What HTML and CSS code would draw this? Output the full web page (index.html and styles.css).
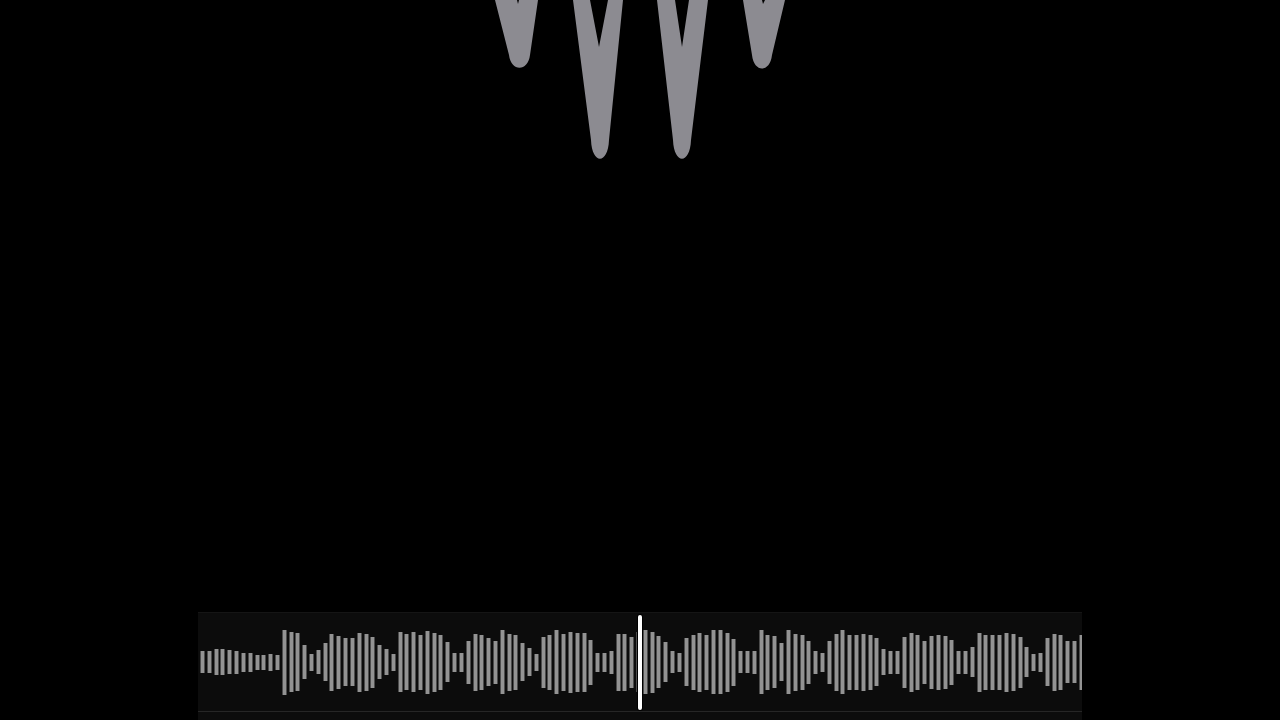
FILE: index.html
```html
<!DOCTYPE html>
<html lang="en">
<head>
    <meta charset="UTF-8">
    <meta name="viewport" content="width=device-width, initial-scale=1.0">
    <title>Waveform</title>
    <link rel="stylesheet" href="styles.css">
</head>
<body>
    <!-- Visualizer spikes at the top -->
    <svg class="spikes" width="1280" height="170" viewBox="0 0 1280 170">
        <path d="M495,0 L509,55 C511,72 528,72 530,55 L538,0 L519,0 L518,4 L517,0 Z"/>
        <path d="M573,0 L591,140 C592,165 608,165 609,140 L623,0 L608,0 L599,47 L590,0 Z"/>
        <path d="M657,0 L673,140 C674,165 690,165 691,140 L708,0 L689,0 L682,47 L675,0 Z"/>
        <path d="M743,0 L752,55 C754,73 770,73 772,55 L785,0 L765,0 L763,4 L762,0 Z"/>
    </svg>

    <div class="spacer"></div>

    <!-- Waveform scrubber -->
    <div class="panel">
        <div class="bars" id="bars"></div>
        <div class="playhead"></div>
    </div>

    <script>
        // bar heights, left to right
        const heights = [
            22, 22, 26, 26, 24, 23, 19, 19, 15, 15, 17, 15, 65, 60, 58, 34, 17, 24, 38, 57,
            53, 48, 48, 59, 57, 51, 34, 26, 17, 60, 56, 60, 55, 63, 59, 55, 40, 19, 19, 43,
            57, 55, 48, 43, 64, 57, 55, 38, 28, 17, 51, 55, 64, 57, 61, 59, 59, 45, 19, 19,
            23, 57, 57, 51, 60, 64, 61, 52, 40, 22, 19, 48, 55, 59, 55, 64, 64, 59, 47, 22,
            22, 23, 64, 55, 52, 38, 64, 57, 55, 43, 23, 19, 43, 57, 64, 55, 55, 57, 55, 48,
            26, 23, 23, 51, 59, 55, 43, 53, 55, 53, 45, 23, 23, 30, 59, 55, 55, 55, 59, 57,
            51, 30, 17, 19, 48, 57, 55, 42, 42, 55
        ];

        const bars = document.getElementById("bars");
        heights.forEach(h => {
            const bar = document.createElement("div");
            bar.className = "bar";
            bar.style.height = h + "px";
            bars.appendChild(bar);
        });
    </script>
</body>
</html>
```

FILE: styles.css
```css
body {
    margin: 0;
    height: 720px;
    background: #000;
    display: flex;
    flex-direction: column;
    overflow: hidden;
    font-family: "Liberation Sans", sans-serif;
}
.spikes {
    display: block;
    flex: none;
}
.spikes path {
    fill: #8c8b91;
}
.spacer {
    flex: 1;
}
.panel {
    position: relative;
    flex: none;
    width: 884px;
    height: 107px;
    margin-left: 198px;
    background: #0c0c0c;
    border-top: 1px solid #151515;
    overflow: hidden;
}
.bars {
    display: flex;
    align-items: center;
    gap: 1.816px;
    height: 98px;
    padding-left: 2px;
    border-bottom: 1px solid #262626;
}
.bar {
    flex: none;
    width: 3px;
    background: #939393;
    border-left: 1px solid #4c4c4c;
    border-right: 1px solid #4c4c4c;
}
.playhead {
    position: absolute;
    left: 440px;
    top: 2px;
    width: 4px;
    height: 95px;
    background: #fff;
    border-radius: 2px;
    box-shadow: 0 0 0 1px #000;
}
```
